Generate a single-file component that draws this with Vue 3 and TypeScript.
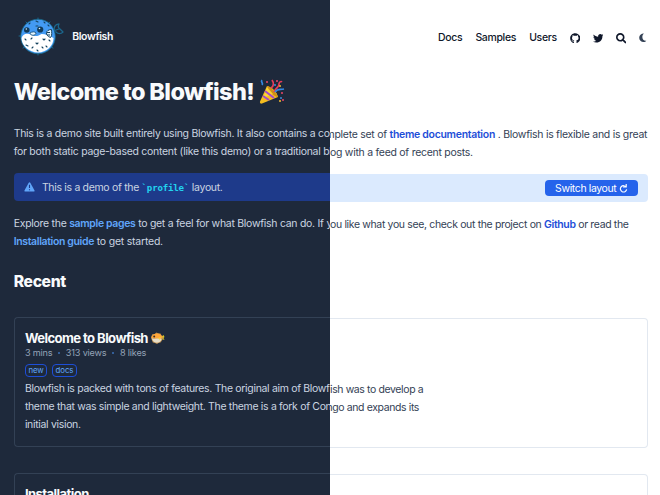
<script setup lang="ts">
const navigation: string[] = ['Docs', 'Samples', 'Users']
const meta: string[] = ['3 mins', '313 views', '8 likes']
const tags: string[] = ['new', 'docs']
</script>

<template>
  <main class="comparison">
    <section class="pane dark">
      <header class="header brand">
        <svg class="logo" viewBox="0 0 46 40">
          <g fill="none" stroke="#1b668c" stroke-width="1.300" stroke-linecap="round" stroke-linejoin="round">
            <path d="M37 14c-2-3 0-7 4-7-1 2-1 4 1 5l3 3c-2 2-5 2-7 0m0-2 3-1" />
            <path d="M20 1v2M8 5l1 1M32 5l-1 1M1 19h2M5 31l2-1M20 37v1M35 31l-2-1" stroke-width="1" />
          </g>
          <circle cx="20" cy="19.500" r="17.300" fill="#439af3" stroke="#17647f" stroke-width=".8" />
          <path d="M3.500 21c2-5 6-5 10-3 4 2 7 1 10-1 4 0 8 2 12 4 0 8-7 14.500-15.500 14.500S3.500 29 3.500 21Z" fill="#fff" />
          <g fill="#123b5a"><circle cx="8.800" cy="13" r="2.800" /><circle cx="22.200" cy="12.500" r="3.100" /></g>
          <g fill="#e8f7ff"><circle cx="8.300" cy="12" r=".7" /><circle cx="21.500" cy="11.500" r=".8" /></g>
          <path d="M12 16c2-1.500 5-1.500 6 0 0 3-6 3-6 0Z" fill="#e5f5ff" stroke="#174b70" stroke-width=".8" />
          <path d="M33.500 12.500c-6 0-7 6-1 8 2-2 1-6 1-8Z" fill="#e5f5ff" stroke="#17425e" />
          <path d="M32 15.500h-3m3 2.500h-3" stroke="#17425e" />
          <g fill="none" stroke="#16435f" stroke-width="1.100" stroke-linecap="round">
            <path d="m18 4 2 1m-9 2 1-1m14-1 1 1m-9 3h2m10-1 1 1M7 22l1 1m5-1 1-1m4 5 1 1 1-1m5-4 1 1 1-1m4 1 1 1m-4 5 1 1M8 28l2 1m5 1-1 1m10-1 1 1m-6 2 1 1" />
          </g>
        </svg>
        <span>Blowfish</span>
      </header>

      <h1 class="title">
        <span>Welcome to Blowfish!</span>
        <svg class="party" viewBox="0 0 26 26">
          <path d="M8 7C13 8 18 13 19 18L3 24.500c-1.500.5-2.300-.5-2-2Z" fill="#f5bd1f" />
          <path d="M8 7c3 0 9 6 11 11-4 0-11-7-11-11Z" fill="#cf8f18" />
          <path d="m8 8-4 11 10-4Z" fill="#ffdc36" opacity=".8" />
          <path d="m6 12 9 7M4 17l6 4" stroke="#a44bc6" stroke-width="2" />
          <path d="M12 9c3-2 3-5 1-8M15 13c2-5 5-4 5-8 0-2 2-3 3-2" fill="none" stroke="#e83c59" stroke-width="1.700" />
          <path d="M16 13c3-4 5-2 9-3M3 1c-2 2 2 3 0 5" fill="none" stroke="#3489e1" stroke-width="1.700" />
          <g fill="#ec4668"><circle cx="8" cy="3" r="1" /><circle cx="18" cy="2" r="1" /><circle cx="23" cy="14" r="1" /><circle cx="24" cy="21" r="1" /></g>
          <g fill="#408bdd"><circle cx="16" cy="6" r="1" /><circle cx="22" cy="19" r="1" /></g>
          <g fill="#f4bb32"><circle cx="21" cy="7" r="1" /><circle cx="21" cy="22" r="1" /></g>
        </svg>
      </h1>

      <p class="intro">
        <span class="line">This is a demo site built entirely using Blowfish. It also contains a com</span>
        <span class="line">for both static page-based content (like this demo) or a traditional bl</span>
      </p>

      <div class="alert">
        <svg class="warning" viewBox="0 0 12 11"><path d="M5 1.100Q6-.4 7 1.100l4.400 8Q12 10.500 10.500 10.500h-9Q0 10.500.6 9.100Z" fill="#60a5fa" /><path d="M6 3v3.700M6 8v1.100" stroke="#1e3a8a" stroke-width="1.200" /></svg>
        <span>This is a demo of the <code>`profile`</code> layout.</span>
      </div>

      <p class="explore">
        <span class="line">Explore the <a>sample pages</a> to get a feel for what Blowfish can do. If y</span>
        <span class="line started"><a>Installation guide</a> to get started.</span>
      </p>

      <h2 class="recent">Recent</h2>

      <article class="card">
        <div class="card-head">
          <h3>
            <span>Welcome to Blowfish</span>
            <svg class="fish" viewBox="0 0 14 12">
              <path d="m10 5 2.500-2 1 2-1 1 1 2-3-1Z" fill="#d9c52c" />
              <path d="m0 5 1.500-3 2 .2L5.500.5l1.500.7 2.500.3 1 2L12 6l-1 2.500-1.500 2-2 .5L6 12l-2-1-2.200-.5-.8-2L0 6Z" fill="#b98a4c" />
              <path d="M.5 5.500C1.500.5 10 0 11.500 5.500L9 7 1 6Z" fill="#ffa638" />
              <path d="M.8 6.300c2 1 7-.5 10 .5-1 5.500-9 5.500-10-.5Z" fill="#e7dcc6" />
              <circle cx="3.200" cy="4.600" r="1" fill="#3c2b24" /><path d="m7 6 3-1-1 3Z" fill="#f4cf38" />
            </svg>
          </h3>
          <div class="meta">
            <template v-for="(item, index) in meta" :key="item">
              <i v-if="index"></i><span>{{ item }}</span>
            </template>
          </div>
          <div class="tags"><span v-for="tag in tags" :key="tag">{{ tag }}</span></div>
        </div>
        <p class="summary">
          <span class="line">Blowfish is packed with tons of features. The original aim of Blowf</span>
          <span class="line">theme that was simple and lightweight. The theme is a fork of Con</span>
          <span class="line">initial vision.</span>
        </p>
      </article>

      <article class="card">
        <h3>Installation</h3>
      </article>
    </section>

    <section class="pane light">
      <nav class="header navigation">
        <a v-for="item in navigation" :key="item">{{ item }}</a>
        <svg class="nav-icon" viewBox="0 0 496 512"><path fill="currentColor" d="M244.800 8C106.100 8 0 113.300 0 252c0 110.900 69.800 205.800 169.500 239.200 12.800 2.300 17.300-5.600 17.300-12.100 0-6.200-.3-40.400-.3-61.400 0 0-70 15-84.700-29.800 0 0-11.400-29.100-27.800-36.600 0 0-22.900-15.700 1.600-15.400 0 0 24.900 2 38.600 25.800 21.900 38.600 58.600 27.500 72.900 20.900 2.300-16 8.800-27.100 16-33.700-55.900-6.200-112.300-14.300-112.300-110.500 0-27.500 7.600-41.300 23.600-58.900-2.600-6.500-11.100-33.300 2.600-67.900 20.900-6.500 69 27 69 27 20-5.600 41.500-8.500 62.800-8.500s42.800 2.900 62.800 8.500c0 0 48.100-33.600 69-27 13.700 34.700 5.200 61.400 2.600 67.900 16 17.700 25.800 31.500 25.800 58.900 0 96.500-58.900 104.200-114.800 110.500 9.200 7.900 17 22.900 17 46.400 0 33.700-.3 75.400-.3 83.600 0 6.500 4.600 14.400 17.300 12.100C428.200 457.800 496 362.900 496 252 496 113.300 383.500 8 244.800 8z" /></svg>
        <svg class="nav-icon" viewBox="0 0 512 512"><path fill="currentColor" d="M459.370 151.716c.325 4.548.325 9.097.325 13.645 0 138.720-105.583 298.558-298.558 298.558-59.452 0-114.680-17.219-161.137-47.106 8.447.974 16.568 1.299 25.340 1.299 49.055 0 94.213-16.568 130.274-44.832-46.132-.975-84.792-31.188-98.112-72.772 6.498.974 12.995 1.624 19.818 1.624 9.421 0 18.843-1.300 27.614-3.573-48.081-9.747-84.143-51.980-84.143-102.985v-1.299c13.969 7.797 30.214 12.670 47.431 13.319-28.264-18.843-46.781-51.005-46.781-87.391 0-19.492 5.197-37.360 14.294-52.954 51.655 63.675 129.300 105.258 216.365 109.807-1.624-7.797-2.599-15.918-2.599-24.040 0-57.828 46.782-104.934 104.934-104.934 30.213 0 57.502 12.670 76.670 33.137 23.715-4.548 46.456-13.320 66.599-25.340-7.798 24.366-24.366 44.833-46.132 57.827 21.117-2.273 41.584-8.122 60.426-16.243-14.292 20.791-32.161 39.308-52.628 54.253z" /></svg>
        <svg class="nav-icon" viewBox="0 0 512 512"><path fill="currentColor" d="M505 442.700 405.300 343c-4.500-4.500-10.600-7-17-7H372c27.600-35.300 44-79.700 44-128C416 93.100 322.900 0 208 0S0 93.100 0 208s93.100 208 208 208c48.300 0 92.700-16.400 128-44v16.300c0 6.400 2.500 12.500 7 17l99.700 99.700c9.400 9.400 24.600 9.400 33.900 0l28.300-28.300c9.400-9.400 9.400-24.600.1-34zM208 336c-70.700 0-128-57.200-128-128 0-70.700 57.200-128 128-128 70.700 0 128 57.200 128 128 0 70.700-57.200 128-128 128z" /></svg>
        <svg class="moon" viewBox="0 0 8 10"><path fill="currentColor" d="M5 .6C2 .6 0 2.500 0 5s2 4.500 4.600 4.500c1.300 0 2.300-.5 2.900-1.400C5 8.400 3.300 6.900 3.300 4.200 3.300 2.700 3.900 1.500 5 .6Z" /></svg>
      </nav>

      <div class="title"></div>

      <p class="intro">
        <span class="line from-m">mplete set of <a>theme documentation</a> . Blowfish is flexible and is great</span>
        <span class="line">og with a feed of recent posts.</span>
      </p>

      <div class="alert">
        <button class="switch">
          <span>Switch layout</span>
          <svg viewBox="0 0 10 10"><path d="M8 3.500A3.500 3.500 0 1 0 8.500 6M4.500 3.300H8V0" fill="none" stroke="currentColor" stroke-width="1.300" /></svg>
        </button>
      </div>

      <p class="explore">
        <span class="line">ou like what you see, check out the project on <a>Github</a> or read the</span>
      </p>

      <div class="recent"></div>

      <article class="card">
        <div class="card-head"></div>
        <p class="summary">
          <span class="line">ish was to develop a</span>
          <span class="line from-n">ngo and expands its</span>
        </p>
      </article>

      <article class="card"></article>
    </section>
  </main>
</template>

<style>
body {
  overflow: hidden;
}
</style>

<style scoped>
.comparison {
  display: grid;
  grid-template-columns: 330px 330px;
  width: 660px;
  height: 495px;
  overflow: hidden;
  font-family: Inter, "Liberation Sans", sans-serif;
  font-size: 10.460px;
  letter-spacing: -.26px;
}

.comparison * {
  box-sizing: border-box;
}

.pane {
  height: 495px;
  overflow: hidden;
}

.dark {
  --border: #334155;
  --link: #60a5fa;
  padding-left: 13.700px;
  background: #1e293b;
  color: #cbd5e1;
}

.light {
  --border: #e2e8f0;
  --link: #1d4ed8;
  padding: 1px 12px 0 0;
  background: #fff;
  color: #334155;
}

.header {
  display: flex;
  align-items: center;
  height: 73px;
  font-weight: 600;
}

.brand {
  gap: 8px;
  padding-left: 4.500px;
  color: #f8fafc;
  letter-spacing: -.35px;
}

.logo {
  width: 46px;
  height: 40px;
}

.navigation {
  justify-content: flex-end;
  gap: 13px;
  padding-right: .7px;
  color: #0f172a;
  letter-spacing: -.3px;
}

.navigation a {
  font-weight: 550;
}

.nav-icon {
  width: 10.500px;
  height: 10.500px;
  margin-top: 2px;
}

.nav-icon + .nav-icon {
  margin-left: -.5px;
}

.moon {
  width: 8px;
  height: 9.500px;
  margin-top: 1px;
  color: #334155;
}

.title {
  display: flex;
  align-items: center;
  gap: 5px;
  height: 37px;
  margin: 0;
  color: #f8fafc;
  font-size: 23.500px;
  font-weight: 800;
  letter-spacing: -.62px;
  white-space: nowrap;
}

.party {
  width: 26px;
  height: 26px;
}

p {
  margin: 0;
}

.line {
  display: block;
  height: 18.100px;
  line-height: 18.100px;
  white-space: nowrap;
}

p a {
  color: var(--link);
  font-weight: 600;
  letter-spacing: -.34px;
}

.light .intro a {
  letter-spacing: -.28px;
}

.from-m {
  text-indent: -4.500px;
}

.from-n {
  text-indent: -3.500px;
}

.intro {
  height: 48.500px;
  margin-top: 14.800px;
}

.light .intro {
  letter-spacing: -.255px;
}

.alert {
  display: flex;
  align-items: center;
  height: 28px;
  padding: 0 10px;
  border-radius: 4px 0 0 4px;
  background: #1e3a8a;
  letter-spacing: -.3px;
}

.light .alert {
  border-radius: 0 4px 4px 0;
  background: #dbeafe;
}

.warning {
  width: 11px;
  height: 10px;
  margin-right: 7.200px;
}

code {
  color: #22d3ee;
  font-family: "DejaVu Sans Mono", monospace;
  font-size: 9.150px;
  font-weight: 700;
  letter-spacing: -.2px;
}

.switch {
  display: flex;
  align-items: center;
  justify-content: center;
  gap: 2.500px;
  width: 93px;
  height: 16px;
  margin-left: auto;
  padding: 0;
  border: 0;
  border-radius: 4px;
  color: #fff;
  background: #2563eb;
  font: inherit;
  letter-spacing: -.36px;
}

.switch svg {
  width: 9px;
  height: 9px;
}

.explore {
  height: 48.200px;
  margin-top: 13.800px;
}

.light .explore {
  letter-spacing: -.335px;
}

.started {
  letter-spacing: -.2px;
}

.recent {
  height: 24px;
  margin: 7px 0 23px;
  color: #f8fafc;
  font-size: 15.700px;
  font-weight: 800;
  letter-spacing: -.35px;
  line-height: 24px;
}

.card {
  height: 130px;
  margin-bottom: 26px;
  padding: 10.500px 10.200px;
  border: 1.300px solid var(--border);
}

.dark .card {
  border-right: 0;
  border-radius: 4px 0 0 4px;
  padding-right: 0;
}

.light .card {
  border-left: 0;
  border-radius: 0 4px 4px 0;
  padding-left: 0;
}

.card-head {
  height: 51px;
}

.summary {
  letter-spacing: -.31px;
}

.light .summary {
  letter-spacing: -.37px;
}

h3 {
  display: flex;
  align-items: center;
  gap: 3px;
  height: 18px;
  margin: 0;
  color: #f8fafc;
  font-size: 13.070px;
  font-weight: 700;
  letter-spacing: -.57px;
  white-space: nowrap;
}

.fish {
  width: 14px;
  height: 12px;
}

.meta {
  display: flex;
  align-items: center;
  height: 12px;
  color: #94a3b8;
  font-size: 9.150px;
  letter-spacing: -.18px;
}

.meta i {
  width: 2px;
  height: 2px;
  margin: 0 5.700px;
  border-radius: 50%;
  background: #3b70b9;
}

.tags {
  display: flex;
  gap: 5px;
  margin-top: 5px;
}

.tags span {
  height: 13px;
  padding: 0 2.500px;
  border: 1px solid #1d4ed8;
  border-radius: 4px;
  color: #60a5fa;
  font-size: 7.840px;
  letter-spacing: -.08px;
  line-height: 11px;
}
</style>
